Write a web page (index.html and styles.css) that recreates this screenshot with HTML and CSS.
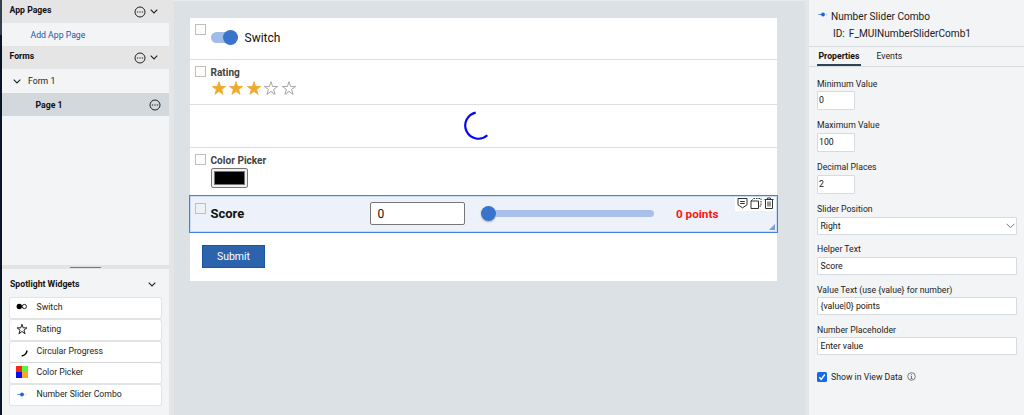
FILE: index.html
```html
<!DOCTYPE html>
<html lang="en">

<head>
    <meta charset="UTF-8">
    <meta name="viewport" content="width=device-width, initial-scale=1.0">
    <title>Form Designer</title>
    <link rel="stylesheet" href="styles.css">
</head>

<body>
    <svg class="sprite" width="0" height="0">
        <symbol id="more" viewBox="0 0 12 12">
            <circle cx="6" cy="6" r="5" fill="none" stroke="#222" stroke-width="1" />
            <path d="M2.9 6h1.3M5.35 6h1.3M7.8 6h1.3" stroke="#222" stroke-width="1.2" />
        </symbol>
        <symbol id="chevron" viewBox="0 0 8 5">
            <path d="M.7.7 4 4 7.3.7" fill="none" stroke="#222" stroke-width="1.1" />
        </symbol>
        <symbol id="star" viewBox="0 0 24 24">
            <path d="M12 2.5l2.400 7.200h7.500l-6 4.500 2.200 7.300L12 17l-6.100 4.500 2.200-7.300-6-4.500h7.500z" />
        </symbol>
        <symbol id="slider" viewBox="0 0 12 7">
            <path d="M1.5 3.5h1.200M3.200 3.5h1" stroke="#2a6bdc" stroke-width="1" />
            <path d="M9 3.5h1.200" stroke="#b5cdf2" stroke-width="1" />
            <circle cx="6" cy="3.5" r="1.900" fill="#1765d8" />
        </symbol>
    </svg>

    <div class="app">
        <div class="rail"></div>

        <aside class="sidebar">
            <div class="section-head">
                <span>App Pages</span>
                <svg class="more"><use href="#more" /></svg>
                <svg class="chevron"><use href="#chevron" /></svg>
            </div>
            <a class="add-page">Add App Page</a>
            <div class="section-head">
                <span>Forms</span>
                <svg class="more"><use href="#more" /></svg>
                <svg class="chevron"><use href="#chevron" /></svg>
            </div>
            <div class="tree-form">
                <svg class="chevron"><use href="#chevron" /></svg>
                <span>Form 1</span>
            </div>
            <div class="tree-page">
                <span>Page 1</span>
                <svg class="more"><use href="#more" /></svg>
            </div>
            <div class="tree-space"></div>
            <div class="splitter"><div class="handle"></div></div>
            <div class="widgets">
                <div class="widgets-head">
                    <span>Spotlight Widgets</span>
                    <svg class="chevron"><use href="#chevron" /></svg>
                </div>
                <div class="widget">
                    <svg width="12" height="12" viewBox="0 0 12 12">
                        <circle cx="3.3" cy="5.5" r="2.7" />
                        <circle cx="8.4" cy="5.5" r="2.1" fill="none" stroke="#222" />
                    </svg>
                    <span>Switch</span>
                </div>
                <div class="widget">
                    <svg class="star-line" width="12" height="12"><use href="#star" /></svg>
                    <span>Rating</span>
                </div>
                <div class="widget">
                    <svg width="12" height="12" viewBox="0 0 12 12">
                        <path d="M11 5.5Q10.5 10 5.7 11" fill="none" stroke="#000" stroke-width="1.5" />
                    </svg>
                    <span>Circular Progress</span>
                </div>
                <div class="widget">
                    <svg width="12" height="12" viewBox="0 0 12 12">
                        <path d="M0 0h6v6H0z" fill="#f52a14" />
                        <path d="M6 0h6v6H6z" fill="#5bf53c" />
                        <path d="M0 6h6v6H0z" fill="#0b0bf5" />
                        <path d="M6 6h6v6H6z" fill="#f9a825" />
                    </svg>
                    <span>Color Picker</span>
                </div>
                <div class="widget">
                    <svg width="12" height="7"><use href="#slider" /></svg>
                    <span>Number Slider Combo</span>
                </div>
            </div>
        </aside>

        <div class="divider"></div>

        <main class="canvas">
            <div class="form">
                <div class="row row-switch">
                    <div class="check"></div>
                    <div class="switch">
                        <div class="switch-thumb"></div>
                    </div>
                    <span class="switch-label">Switch</span>
                </div>
                <div class="row row-rating">
                    <div class="check"></div>
                    <div class="field">
                        <div class="label">Rating</div>
                        <div class="stars">
                            <svg class="on"><use href="#star" /></svg>
                            <svg class="on"><use href="#star" /></svg>
                            <svg class="on"><use href="#star" /></svg>
                            <svg><use href="#star" /></svg>
                            <svg><use href="#star" /></svg>
                        </div>
                    </div>
                </div>
                <div class="row row-progress">
                    <svg width="30" height="30" viewBox="0 0 30 30">
                        <path d="M11.7 2.6A13.2 13.2 0 1 0 23.3 25.3" fill="none" stroke="#0606f0" stroke-width="2.2" />
                    </svg>
                </div>
                <div class="row row-color">
                    <div class="check"></div>
                    <div class="field">
                        <div class="label">Color Picker</div>
                        <div class="swatch"><div class="swatch-color"></div></div>
                    </div>
                </div>
                <div class="row row-score">
                    <div class="check"></div>
                    <div class="score-label">Score</div>
                    <div class="score-input">0</div>
                    <div class="slider">
                        <div class="slider-thumb"></div>
                        <div class="slider-track"></div>
                    </div>
                    <div class="points">0 points</div>
                    <div class="tools">
                        <svg width="11" height="12" viewBox="0 0 11 12">
                            <path d="M1 1.5h9v6.3L5.5 10.9 1 7.800zM3.2 4.500h4.600M3.2 6.500h4.600" />
                        </svg>
                        <svg width="12" height="12" viewBox="0 0 12 12">
                            <path d="M1 4h7.5v7.500H1zM1 4l1.500-1.500" />
                            <path d="M3.500 1.500h7.500v7.500H8.500" stroke-dasharray="1.500 1" />
                        </svg>
                        <svg width="10" height="12" viewBox="0 0 10 12">
                            <path d="M.5 2.5h9M3.5 2.300V1h3v1.300M1.500 2.500V11.500h7V2.500M4 4.500V9.500M6 4.500V9.500" />
                        </svg>
                    </div>
                    <svg class="resize" width="6" height="6" viewBox="0 0 6 6">
                        <path d="M6 0v6H0z" fill="#7d9fd0" />
                    </svg>
                </div>
                <div class="form-footer">
                    <button class="submit">Submit</button>
                </div>
            </div>
        </main>

        <div class="divider divider-right"></div>

        <aside class="props">
            <div class="props-head">
                <div class="props-title">
                    <svg width="12" height="7"><use href="#slider" /></svg>
                    <span>Number Slider Combo</span>
                </div>
                <div class="props-id"><span>ID:</span><span>F_MUINumberSliderComb1</span></div>
            </div>
            <div class="tabs">
                <div class="tab active">Properties</div>
                <div class="tab">Events</div>
            </div>
            <div class="prop">
                <label>Minimum Value</label>
                <div class="input small">0</div>
            </div>
            <div class="prop">
                <label>Maximum Value</label>
                <div class="input small">100</div>
            </div>
            <div class="prop">
                <label>Decimal Places</label>
                <div class="input small">2</div>
            </div>
            <div class="prop wide">
                <label>Slider Position</label>
                <div class="input select">
                    <span>Right</span>
                    <svg width="9" height="6" viewBox="0 0 9 6">
                        <path d="M.5.7 4.5 4.7 8.5.7" fill="none" stroke="#777" />
                    </svg>
                </div>
            </div>
            <div class="prop wide">
                <label>Helper Text</label>
                <div class="input">Score</div>
            </div>
            <div class="prop wide">
                <label>Value Text (use {value} for number)</label>
                <div class="input">{value|0} points</div>
            </div>
            <div class="prop wide">
                <label>Number Placeholder</label>
                <div class="input">Enter value</div>
            </div>
            <div class="show-data">
                <svg width="10" height="10" viewBox="0 0 10 10">
                    <rect width="10" height="10" rx="1.5" fill="#1668e8" />
                    <path d="M2.3 5.3 4.2 7.3 7.8 2.5" fill="none" stroke="#fff" stroke-width="1.4" />
                </svg>
                <span>Show in View Data</span>
                <svg width="9" height="9" viewBox="0 0 9 9">
                    <circle cx="4.5" cy="4.5" r="3.8" fill="none" stroke="#555f6b" stroke-width=".8" />
                    <path d="M4.5 2v1M3.6 4h.9v2.5M3.4 6.6h2.2" fill="none" stroke="#555f6b" stroke-width=".8" />
                </svg>
            </div>
        </aside>
    </div>
</body>

</html>
```
FILE: styles.css
```css
* {
    box-sizing: border-box;
}

body {
    margin: 0;
    font-family: Roboto, "Liberation Sans", sans-serif;
    font-size: 8.7px;
    line-height: 12px;
    color: #1c1c1c;
}

svg {
    display: block;
    flex-shrink: 0;
}

.sprite {
    position: absolute;
}

.app {
    display: flex;
    width: 1024px;
    height: 415px;
    overflow: hidden;
    background-color: #f3f4f6;
}

.rail {
    width: 2px;
    background: linear-gradient(#35404d 35px, #071526 35px);
}

/* left panel */
.sidebar {
    width: 167px;
    display: flex;
    flex-direction: column;
}

.more {
    width: 12px;
    height: 12px;
}

.chevron {
    width: 8px;
    height: 5px;
}

.section-head {
    display: flex;
    align-items: center;
    height: 23px;
    padding: 0 11px 0 7.5px;
    background-color: #e5e5e5;
    font-weight: 700;
    color: #111;
}

.section-head span {
    flex: 1;
    padding-bottom: 3px;
}

.section-head .chevron {
    margin-left: 4px;
}

.add-page {
    height: 23px;
    padding: 6px 0 0 28.5px;
    color: #1d56a5;
}

.tree-form {
    display: flex;
    align-items: center;
    gap: 7px;
    height: 24px;
    padding-left: 11px;
}

.tree-page {
    display: flex;
    align-items: center;
    justify-content: space-between;
    height: 23px;
    padding: 0 8.5px 0 33.5px;
    background-color: #d3d8dc;
    font-weight: 700;
    color: #111;
}

.tree-space {
    flex: 1;
}

.splitter {
    height: 4px;
    padding-top: 2px;
    background-color: #e3e3e3;
}

.handle {
    width: 31px;
    height: 1px;
    margin-left: 68px;
    background-color: #777;
}

.widgets {
    height: 146px;
    padding: 9px 8px 0;
}

.widgets-head {
    display: flex;
    align-items: center;
    justify-content: space-between;
    height: 12px;
    margin-bottom: 8px;
    padding-right: 5px;
    font-weight: 700;
    color: #111;
}

.widget {
    display: flex;
    align-items: center;
    gap: 8.5px;
    height: 20px;
    margin-bottom: 1.8px;
    padding: 0 0 2px 6px;
    background-color: #fff;
    border-radius: 2px;
    box-shadow: 0 0 1px 1px rgba(0, 0, 0, 0.07);
}

.star-line {
    fill: none;
    stroke: #222;
    stroke-width: 2;
}

.divider {
    width: 5px;
    background-color: #e5e5e5;
}

.divider-right {
    width: 4px;
}

/* form */
.canvas {
    width: 631px;
    padding: 17px 0 0 16px;
    background-color: #dce1e5;
    border-top: 1px solid #e8eaec;
}

.form {
    width: 587px;
    height: 263px;
    background-color: #fff;
}

.row {
    display: flex;
    position: relative;
    padding-left: 5px;
    border-bottom: 1px solid #dedede;
}

.check {
    width: 11px;
    height: 11px;
    flex-shrink: 0;
    border: 1px solid #bfbfbf;
    background-color: #fffbf9;
}

.row-switch {
    height: 42px;
    padding-top: 6px;
}

.switch {
    width: 26px;
    height: 11px;
    margin: 8px 0 0 5px;
    border-radius: 6px;
    background-color: #a2bce9;
}

.switch-thumb {
    width: 15px;
    height: 15px;
    margin: -2px 0 0 12px;
    border-radius: 50%;
    background-color: #3873cc;
}

.switch-label {
    margin: 6px 0 0 7.5px;
    font-size: 12px;
    line-height: 16px;
    color: #111;
}

.row-rating {
    height: 45px;
    padding-top: 6px;
}

.field {
    margin-left: 4.5px;
}

.label {
    padding-top: 1px;
    font-size: 10.1px;
    font-weight: 700;
    line-height: 12px;
    color: #444;
}

.stars {
    display: flex;
    gap: 1.5px;
    margin-top: 1px;
}

.stars svg {
    width: 16px;
    height: 16px;
    fill: none;
    stroke: #999;
    stroke-width: 1.3;
}

.stars .on {
    fill: #f0a92d;
    stroke: #f0a92d;
}

.row-progress {
    height: 43px;
    padding: 5px 0 0 274px;
}

.row-color {
    height: 47px;
    padding-top: 6px;
    border-bottom: 0;
}

.swatch {
    width: 37px;
    height: 20px;
    margin-top: 1px;
    padding: 2px;
    border: 1px solid #777;
    border-radius: 2px;
    background-color: #efefef;
}

.swatch-color {
    height: 14px;
    background-color: #000;
    border: 1px solid #777;
}

.row-score {
    width: 589px;
    height: 38px;
    margin-left: -1px;
    padding: 0 0 1px 5px;
    align-items: center;
    border: 1px solid #4282dc;
    background-color: #edf2fa;
    box-shadow: inset 0 0 0 1px #c9dcf6;
}

.row-score .check {
    margin-bottom: 11px;
    background-color: #f0f1f5;
}

.score-label {
    flex-shrink: 0;
    width: 164px;
    padding-left: 4.5px;
    font-size: 13px;
    font-weight: 700;
    line-height: 16px;
    color: #111;
}

.score-input {
    width: 95px;
    height: 23px;
    padding-left: 6.5px;
    border: 1px solid #777;
    border-radius: 2px;
    background-color: #fff;
    font-size: 12px;
    line-height: 22px;
    color: #111;
}

.slider {
    display: flex;
    align-items: center;
    width: 173px;
    margin-left: 15.5px;
}

.slider-thumb {
    width: 15px;
    height: 15px;
    border-radius: 50%;
    background-color: #3873cc;
    box-shadow: 0 1px 2px rgba(0, 0, 0, 0.3);
}

.slider-track {
    flex: 1;
    height: 7px;
    border-radius: 0 4px 4px 0;
    background-color: #a9c1ea;
}

.points {
    margin-left: 22.5px;
    font-size: 11.7px;
    font-weight: 700;
    color: #f51616;
}

.tools {
    position: absolute;
    top: 1px;
    right: 1px;
    display: flex;
    gap: 2px;
    height: 14px;
    padding: 0 2px;
    background-color: #fff;
}

.tools path {
    fill: none;
    stroke: #333;
    stroke-width: 1;
}

.resize {
    position: absolute;
    right: 2px;
    bottom: 2px;
}

.form-footer {
    padding: 12px 0 0 12px;
}

.submit {
    display: block;
    width: 63px;
    height: 23px;
    padding: 0;
    border: 1px solid #1955a5;
    background-color: #2b63ad;
    color: #fff;
    font-family: inherit;
    font-size: 10.5px;
}

/* properties panel */
.props {
    width: 215px;
}

.props-head {
    height: 47px;
    padding: 11px 0 0 8px;
    border-bottom: 1px solid #dadde0;
    font-size: 10.1px;
    color: #222;
}

.props-title {
    display: flex;
    gap: 2px;
}

.props-id {
    display: flex;
    gap: 4px;
    margin-top: 5px;
    padding-left: 16px;
}

.tabs {
    display: flex;
    gap: 14px;
    height: 20px;
    margin-bottom: 10.5px;
    padding-left: 8px;
    border-bottom: 1px solid #d6dadd;
}

.tab {
    height: 19px;
    padding: 3px 1.5px 0;
}

.tab.active {
    width: 44px;
    font-weight: 700;
    color: #111;
    border-bottom: 2px solid #2f4358;
}

.prop {
    height: 41.9px;
    padding: 0 7px 0 8px;
}

.prop.wide {
    height: 40.2px;
}

.prop label {
    display: block;
}

.input {
    height: 18px;
    margin-top: 1.5px;
    padding-left: 2.5px;
    border: 1px solid #d5dbe0;
    border-radius: 1px;
    background-color: #fff;
    line-height: 16px;
    color: #111;
}

.small {
    width: 38px;
    height: 19px;
    padding-left: 1px;
    line-height: 17px;
}

.select {
    display: flex;
    align-items: center;
    justify-content: space-between;
    padding-right: 1px;
}

.show-data {
    display: flex;
    align-items: center;
    gap: 4px;
    padding: 7px 0 0 8px;
}
```
